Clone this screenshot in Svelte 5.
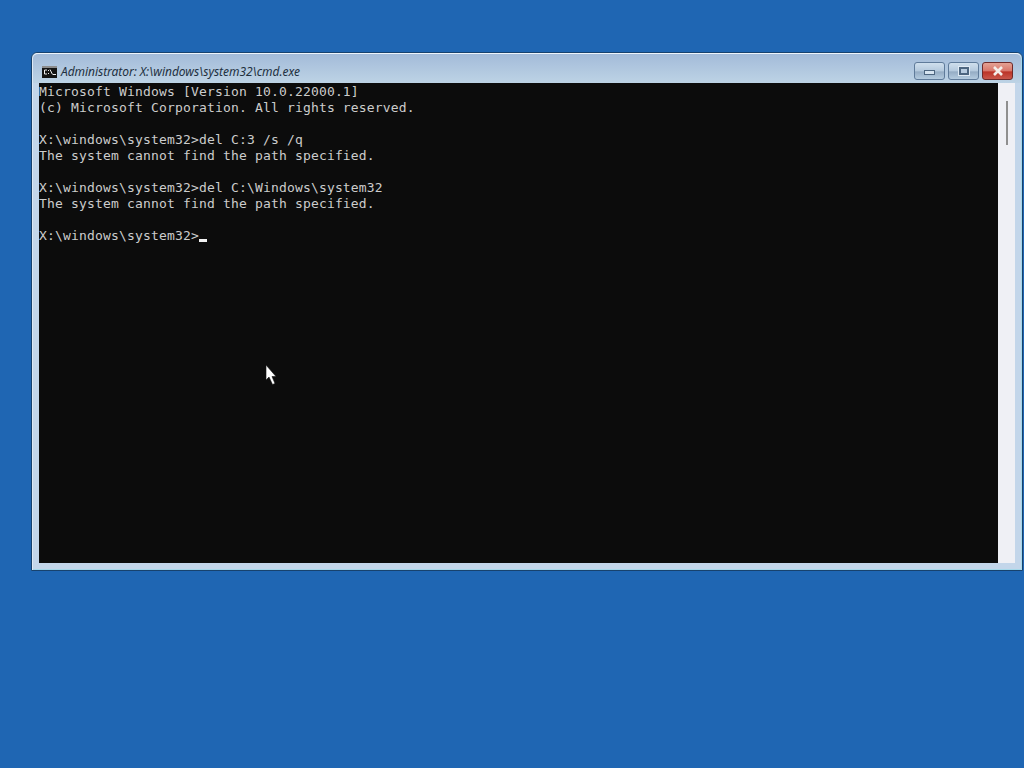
<script>
  const lines = [
    'Microsoft Windows [Version 10.0.22000.1]',
    '(c) Microsoft Corporation. All rights reserved.',
    '',
    'X:\\windows\\system32>del C:3 /s /q',
    'The system cannot find the path specified.',
    '',
    'X:\\windows\\system32>del C:\\Windows\\system32',
    'The system cannot find the path specified.',
    ''
  ];
  const prompt = 'X:\\windows\\system32>';
</script>

<div class="desktop">
  <div class="window">
    <div class="titlebar">
      <svg class="app-icon" width="15" height="12" viewBox="0 0 15 12">
        <rect width="15" height="12" fill="#141414" />
        <rect width="15" height="2" fill="#8c8c8c" />
        <path d="M5 4 H2.5 V8 H5" stroke="#eee" fill="none" />
        <rect x="6" y="4" width="1" height="1" fill="#eee" />
        <rect x="6" y="7" width="1" height="1" fill="#eee" />
        <path d="M8 3.5 L10.5 8.5" stroke="#eee" fill="none" />
        <rect x="11" y="8" width="3" height="1" fill="#eee" />
      </svg>
      <span class="title">Administrator: X:\windows\system32\cmd.exe</span>
      <div class="controls">
        <div class="btn min"><span class="glyph-min"></span></div>
        <div class="btn max"><span class="glyph-max"></span></div>
        <div class="btn close">
          <svg width="12" height="10" viewBox="0 0 12 10">
            <path d="M2 1 L10 9 M10 1 L2 9" stroke="#f4eeea" stroke-width="2.6" fill="none" />
          </svg>
        </div>
      </div>
    </div>
    <div class="body">
      <div class="console">
        {#each lines.slice(0, -1) as line}
          <div class="line">{line}</div>
        {/each}
        <div class="line">{prompt}<span class="cursor"></span></div>
        <svg class="pointer" width="12" height="22" viewBox="0 0 12 22">
          <path d="M1 1 L1 16 L4 13 L7.5 20.5 L10 19.5 L7 12.5 L11 12.5 Z" fill="#fff" stroke="#111" stroke-width="0.6" />
        </svg>
      </div>
      <div class="scrollbar"><div class="thumb"></div></div>
    </div>
  </div>
</div>

<style>
  :global(body) {
    margin: 0;
    background: #1f66b3;
  }

  .desktop {
    width: 1024px;
    height: 768px;
    box-sizing: border-box;
    padding: 52px 1px 0 31px;
    background: #1f66b3;
    overflow: hidden;
  }

  .window {
    width: 992px;
    height: 519px;
    box-sizing: border-box;
    padding: 0 7px 7px 7px;
    border: 1px solid #17426e;
    border-radius: 6px 6px 0 0;
    background: #c3d6ea;
    box-shadow: inset 1px 0 0 #dfe9f4, inset -1px -1px 0 #a5d8ea;
  }

  .titlebar {
    height: 30px;
    display: flex;
    align-items: center;
    box-sizing: border-box;
    border-top: 1px solid #eef4fa;
    background: linear-gradient(180deg, #a3bbd9 0%, #bdd3e5 100%);
    margin: 0 -6px;
    padding: 0 8px 0 9px;
    border-radius: 5px 5px 0 0;
  }

  .app-icon {
    flex: none;
    margin-top: 6px;
  }

  .title {
    margin: 6px 0 0 4px;
    font: italic 12px "Noto Sans", "Open Sans", sans-serif;
    letter-spacing: -0.05px;
    color: #22303f;
    white-space: nowrap;
  }

  .controls {
    margin-left: auto;
    margin-top: 5px;
    display: flex;
    gap: 3px;
  }

  .btn {
    width: 31px;
    height: 18px;
    box-sizing: border-box;
    display: flex;
    align-items: center;
    justify-content: center;
    border: 1px solid #5f7b9a;
    border-radius: 3px;
    background: linear-gradient(180deg, #cfdfed 0%, #b4c9dd 50%, #94acc4 55%, #b4cbdf 100%);
  }

  .close {
    border-color: #6e2a2a;
    background: linear-gradient(180deg, #e4a294 0%, #d8766a 50%, #bb3327 55%, #c9574b 100%);
  }

  .glyph-min {
    width: 9px;
    height: 3px;
    margin-top: 3px;
    background: #d6e4f0;
    border: 1px solid #4d6680;
  }

  .glyph-max {
    width: 6px;
    height: 4px;
    margin-top: -1px;
    border: 2px solid #4d6680;
    outline: 1px solid #dfeaf4;
    background: #b8cce0;
  }

  .body {
    display: flex;
    height: 480px;
  }

  .console {
    position: relative;
    width: 960px;
    box-sizing: border-box;
    padding-top: 1px;
    background: #0c0c0c;
    color: #cccccc;
    font: 13px/16px "DejaVu Sans Mono", "Liberation Mono", monospace;
    letter-spacing: 0.17px;
    white-space: pre;
    overflow: hidden;
  }

  .line {
    height: 16px;
  }

  .cursor {
    display: inline-block;
    width: 8px;
    height: 3px;
    background: #f2f2f2;
    vertical-align: -2px;
  }

  .pointer {
    position: absolute;
    left: 226px;
    top: 281px;
  }

  .scrollbar {
    width: 17px;
    background: #eff0f5;
    position: relative;
  }

  .thumb {
    position: absolute;
    left: 8px;
    top: 18px;
    width: 2px;
    height: 44px;
    background: #8f8f8f;
  }
</style>
